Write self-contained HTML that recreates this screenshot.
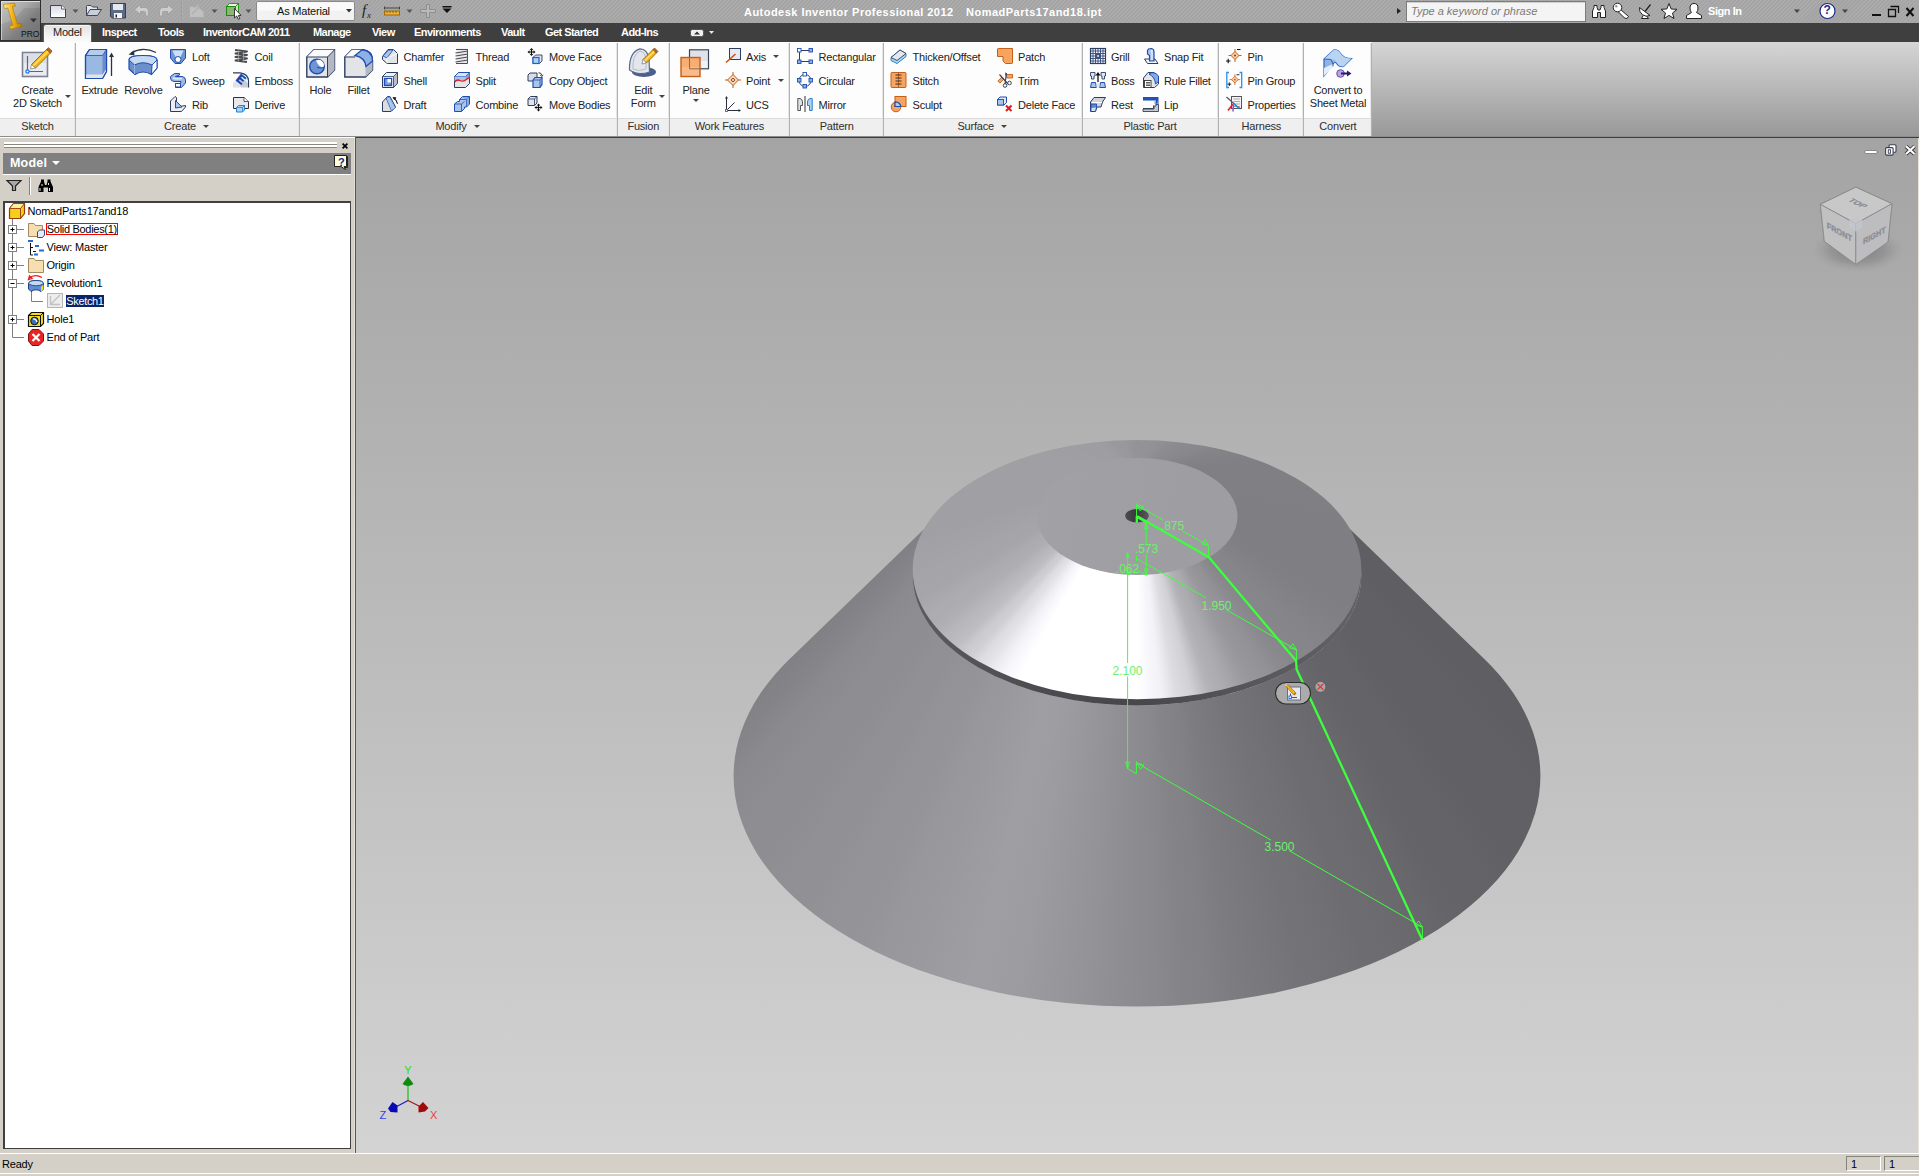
<!DOCTYPE html>
<html lang="en"><head><meta charset="utf-8"><title>Autodesk Inventor Professional 2012 - NomadParts17and18.ipt</title>
<style>
html,body{margin:0;padding:0}
body{width:1919px;height:1176px;position:relative;overflow:hidden;background:#d4d0c8;font-family:"Liberation Sans",sans-serif;font-size:11px;color:#222;line-height:13px}
.a{position:absolute}
.t{position:absolute;white-space:nowrap;line-height:13px;height:13px;letter-spacing:-.2px}
.c{transform:translateX(-50%);text-align:center}
svg{position:absolute;overflow:visible}
#title{left:0;top:0;width:1919px;height:23px;background:repeating-linear-gradient(135deg,#ababab 0,#ababab 1.400px,#a4a4a4 1.400px,#a4a4a4 2.830px)}
#tabs{left:0;top:23px;width:1919px;height:19px;background:#3f3f3f}
#ribbon{left:0;top:42px;width:1919px;height:94px;background:linear-gradient(#d6d6d6 0,#cfcfcf 10px,#b5b5b5 50px,#9a9a9a 92px,#9a9a9a)}
.pn{position:absolute;top:0;height:94px;background:#fcfcfc}
.pn i{position:absolute;left:0;right:0;top:76px;height:18px;background:#efefef;border-top:1px solid #dcdcdc;box-sizing:border-box}
.sep{position:absolute;top:1px;width:1px;height:92px;background:#a8a8a8}
.tab{position:absolute;top:3px;color:#fff;font-weight:bold;letter-spacing:-.55px}
.pt{position:absolute;top:78px;color:#333}
.dn{position:absolute;width:0;height:0;border-left:3px solid transparent;border-right:3px solid transparent;border-top:3.500px solid #444}
</style></head><body>
<div id="title" class="a">
<!-- app button -->
<div class="a" style="left:0;top:0;width:41px;height:41px;background:#2e2e2e;z-index:5"></div>
<div class="a" style="left:1px;top:1px;width:39px;height:39px;z-index:6;background:linear-gradient(135deg,#c9c9c9 0%,#a8a8a8 38%,#8a8a8a 62%,#7a7a7a 100%);box-shadow:inset 1px 1px 0 #dcdcdc"></div>
<svg class="a" style="left:0;top:0;z-index:7" width="41" height="41" viewBox="0 0 41 41">
<defs><linearGradient id="gI" x1="0" y1="0" x2="1" y2="0"><stop offset="0" stop-color="#ffe9a0"/><stop offset=".45" stop-color="#f7b81a"/><stop offset="1" stop-color="#b87a00"/></linearGradient></defs>
<path d="M1 24 Q14 22 24 8 L40 8 L40 40 L1 40Z" fill="#000" opacity=".08"/>
<path d="M3.5 4.5 L14.5 3 L15.5 6 L12.3 6.8 L17.5 24 L21.2 23.3 L22 26.5 L10.5 29.2 L9.5 26 L12.8 25.2 L7.8 8 L4.5 8.6Z" fill="url(#gI)" stroke="#a06c00" stroke-width=".5"/>
<path d="M30 18.5 L37 18.5 L33.5 22.5Z" fill="#2f3540"/>
</svg>
<div class="t" style="left:21px;top:28px;z-index:8;font-size:8.500px;color:#111;letter-spacing:0">PRO</div>
<!-- QAT icons -->
<svg class="a" style="left:0;top:0" width="460" height="23" viewBox="0 0 460 23">
<defs>
<linearGradient id="gP" x1="0" y1="0" x2="0" y2="1"><stop offset="0" stop-color="#d8dbe6"/><stop offset="1" stop-color="#fff"/></linearGradient>
</defs>
<!-- new -->
<path d="M50.5 5.5 H61.5 L65.5 9 V17.5 H50.5Z" fill="url(#gP)" stroke="#3e4656" stroke-width="1"/>
<path d="M61.5 5.5 V9 H65.5" fill="#fff" stroke="#3e4656" stroke-width=".8"/>
<path d="M72.5 9.5 h6 l-3 3.5z" fill="#555"/>
<!-- open -->
<path d="M86.5 15.5 V6.5 Q86.5 5.5 87.5 5.5 H91 L92.5 7 H97.5 V9" fill="#e4e7ee" stroke="#3e4656"/>
<path d="M86.5 15.5 L90 9.5 H101.5 L97.5 15.5Z" fill="#c9cedb" stroke="#3e4656"/>
<!-- save -->
<path d="M110.5 3.5 H125.5 V18 H112.5 L110.5 16.5Z" fill="#5d6a85" stroke="#363e50"/>
<rect x="113" y="4" width="10" height="6" fill="#e6e8ee"/>
<rect x="114" y="13" width="8" height="5" fill="#f4f4f6"/><rect x="115.5" y="14.5" width="1.5" height="3" fill="#222"/>
<!-- undo -->
<path d="M134.5 9.5 L140.5 4.5 V7.5 H145 Q148.5 7.5 148.5 12 V16 H145.5 V12.5 Q145.5 11.5 144.5 11.5 H140.5 V14.5Z" fill="#cdcdcd" stroke="#a2a2a2"/>
<!-- redo -->
<path d="M173.5 9.5 L167.5 4.5 V7.5 H163 Q159.5 7.5 159.5 12 V16 H162.5 V12.5 Q162.5 11.5 163.5 11.5 H167.5 V14.5Z" fill="#cdcdcd" stroke="#a2a2a2"/>
<rect x="181" y="1" width="1" height="20" fill="#9e9e9e"/><rect x="182" y="1" width="1" height="20" fill="#adadad"/>
<!-- greyed icon -->
<path d="M189.5 6.5 H198 L204 12 V17.5 H189.5Z" fill="#c0c0c0" stroke="#aaa"/>
<path d="M192 14 L199 7 M194 8 l4 -3 l1 4" fill="none" stroke="#b0b0b0" stroke-width="1.5"/>
<path d="M211.5 9.5 h6 l-3 3.5z" fill="#555"/>
<!-- green cube -->
<path d="M226.500 6.5 L229.500 3.500 H238.500 V12.500 L235.500 15.500 H226.500Z" fill="#8fbf6a" stroke="#1d8a14"/>
<path d="M229.500 3.500 H238.500 L235.500 6.5 H226.500Z" fill="#e8f5e0" stroke="#1d8a14" stroke-width=".8"/>
<path d="M235.500 6.5 V15.500 L238.500 12.500 V3.500Z" fill="#cfe6c0" stroke="#1d8a14" stroke-width=".8"/>
<rect x="226.500" y="6.500" width="9" height="9" fill="#8eb375" stroke="#1d8a14"/>
<!-- cursor -->
<path d="M234.5 8.5 V18 L236.700 16 L238.300 19.300 L239.800 18.600 L238.300 15.500 L241 15.300Z" fill="#fff" stroke="#111" stroke-width=".8"/>
<path d="M245.500 9.5 h6 l-3 3.5z" fill="#555"/>
<!-- dropdown -->
<rect x="256.500" y="1.500" width="98" height="19" rx="1.500" fill="#f2f2f2" stroke="#8b8b8b"/>
<rect x="257.500" y="2.500" width="96" height="8" fill="#fafafa"/>
<path d="M346 9 h6 l-3 3.5z" fill="#333"/>
<!-- measure icon -->
<g transform="translate(0 2.500)"><rect x="384.500" y="8.500" width="15" height="4" fill="#f0b030" stroke="#9a6a10"/>
<path d="M387 8.500v2M390 8.500v2M393 8.500v2M396 8.500v2" stroke="#7a5408" stroke-width=".8"/>
<path d="M384.500 5.500 H399.500 M384.500 4v3 M399.500 4v3" stroke="#444" stroke-width="1"/>
</g>
<path d="M406.500 9.5 h6 l-3 3.5z" fill="#555"/>
<!-- plus -->
<path d="M426.500 4.500 H429.500 V9.500 H435.500 V12.500 H429.500 V17.500 H426.500 V12.500 H420.500 V9.500 H426.500Z" fill="#b9b9b9" stroke="#8e8e8e"/>
<path d="M442.500 8.500h9l-4.500 4.500z" fill="#111"/><rect x="442.500" y="6" width="9" height="1.500" fill="#111"/>
</svg>
<div class="t" style="left:277px;top:5px;color:#111">As Material</div>
<div class="t" style="left:362px;top:3px;font-family:'Liberation Serif',serif;font-style:italic;font-size:15px;color:#222;line-height:15px">f<span style="font-size:9px;position:relative;top:3px;left:1px">x</span></div>
<!-- title text -->
<div class="t" style="left:744px;top:6px;color:#fff;font-weight:bold;letter-spacing:.47px;font-size:11px">Autodesk Inventor Professional 2012</div>
<div class="t" style="left:966px;top:6px;color:#fff;font-weight:bold;letter-spacing:.5px;font-size:11px">NomadParts17and18.ipt</div>
<!-- search -->
<div class="dn" style="left:1397px;top:8px;border:none;border-top:3.500px solid transparent;border-bottom:3.500px solid transparent;border-left:4px solid #222"></div>
<div class="a" style="left:1406px;top:1px;width:178px;height:19px;background:#f4f4f4;border:1px solid #7d7d7d;box-shadow:inset 0 1px 0 #d0d0d0"></div>
<div class="t" style="left:1411px;top:5px;color:#7a7a7a;font-style:italic;font-size:11px;letter-spacing:0">Type a keyword or phrase</div>
<svg class="a" style="left:1590px;top:0" width="329" height="23" viewBox="1590 0 329 23">
<!-- binoculars -->
<path d="M1592.500 17.500 V11 L1594 7.500 V5.500 H1597 V7.500 L1598 10 H1600 L1601 7.500 V5.500 H1604 V7.500 L1605.500 11 V17.500 H1600.500 V12.500 H1597.500 V17.500Z" fill="#fff" stroke="#222" stroke-width="1"/>
<!-- key -->
<path d="M1620 9L1628.500 16.500L1627 18.500L1624.500 18L1618 11.500" fill="#fff" stroke="#222"/><circle cx="1617.500" cy="7.500" r="4.300" fill="#fff" stroke="#222"/><circle cx="1616.300" cy="6.300" r="1.200" fill="#999"/>
<!-- satellite -->
<path d="M1641.500 18.500L1644.500 13.500L1648.500 18.500Z" fill="#fff" stroke="#222"/><path d="M1639.500 7.500A7.500 7.500 0 0 0 1650 15.500Z" fill="#fff" stroke="#222"/><path d="M1645 11.500L1650.500 4.500" stroke="#222" stroke-width="1.300"/>
<!-- star -->
<path d="M1669 3.500 L1671.200 9 L1677 9.300 L1672.500 13 L1674 18.500 L1669 15.400 L1664 18.500 L1665.500 13 L1661 9.300 L1666.800 9Z" fill="#fff" stroke="#222" stroke-linejoin="round"/>
<!-- person -->
<path d="M1694 3.500 Q1698 3.500 1698 8 Q1698 11 1696.500 12.500 L1701.500 15.500 V18.500 H1686.500 V15.500 L1691.500 12.500 Q1690 11 1690 8 Q1690 3.500 1694 3.500Z" fill="#fff" stroke="#222"/>
<path d="M1794 9.500 h6 l-3 3.500z" fill="#444"/>
<circle cx="1827.500" cy="11" r="7.500" fill="#fff" stroke="#1a2a8a" stroke-width="1.200"/>
<path d="M1842 9.500 h6 l-3 3.500z" fill="#444"/>
<!-- window buttons -->
<rect x="1872" y="14" width="9" height="2" fill="#111"/>
<path d="M1890.500 6.500 H1898.500 V13 M1888.500 9.500 H1895.500 V16.500 H1888.500Z" fill="none" stroke="#111" stroke-width="1.300"/>
<path d="M1906.500 8 L1913.500 16 M1913.500 8 L1906.500 16" stroke="#111" stroke-width="2"/>
</svg>
<div class="t" style="left:1823.500px;top:4px;color:#1a2a8a;font-weight:bold;font-size:12px">?</div>
<div class="t" style="left:1708px;top:5px;color:#fff;font-weight:bold;letter-spacing:-.45px">Sign In</div>
</div>
<div id="tabs" class="a">
<div class="a" style="left:44px;top:2px;width:47px;height:18px;background:linear-gradient(#e2e2e2,#f4f4f4 60%,#fcfcfc);border:1px solid #f8f8f8;border-bottom:none;border-radius:2px 2px 0 0;box-sizing:border-box;box-shadow:0 0 0 1px #5a5a5a"></div>
<div class="tab t" style="left:53px;color:#1c1c1c;font-weight:normal;letter-spacing:-.25px">Model</div>
<div class="tab t" style="left:102px">Inspect</div>
<div class="tab t" style="left:158px">Tools</div>
<div class="tab t" style="left:203px">InventorCAM 2011</div>
<div class="tab t" style="left:313px">Manage</div>
<div class="tab t" style="left:372px">View</div>
<div class="tab t" style="left:414px">Environments</div>
<div class="tab t" style="left:501px">Vault</div>
<div class="tab t" style="left:545px">Get Started</div>
<div class="tab t" style="left:621px">Add-Ins</div>
<svg class="a" style="left:688px;top:4px" width="30" height="12" viewBox="688 27 30 12">
<rect x="690.500" y="29.500" width="13" height="7" rx="2" fill="#f0f0f0" stroke="#555"/>
<path d="M694 34.500 h6 l-3 -3z" fill="#333"/>
<path d="M709 31 h5 l-2.500 3z" fill="#e8e8e8"/>
</svg>
</div>
<div id="ribbon" class="a">
<div class="a" style="left:0;top:0;width:1372px;height:94px;background:#fdfdfd"></div>
<div class="a" style="left:0;top:76px;width:1372px;height:18px;background:#efefef;border-top:1px solid #dadada;box-sizing:border-box"></div>
<div class="a" style="left:74px;top:1px;width:1px;height:93px;background:#e6e6e6"></div><div class="a" style="left:75px;top:1px;width:1px;height:93px;background:#b2b2b2"></div>
<div class="t c" style="left:37.5px;top:78px;color:#2e2e2e">Sketch</div>
<div class="a" style="left:298px;top:1px;width:1px;height:93px;background:#e6e6e6"></div><div class="a" style="left:299px;top:1px;width:1px;height:93px;background:#b2b2b2"></div>
<div class="t c" style="left:180px;top:78px;color:#2e2e2e">Create</div>
<div class="dn" style="left:203px;top:83px"></div>
<div class="a" style="left:616px;top:1px;width:1px;height:93px;background:#e6e6e6"></div><div class="a" style="left:617px;top:1px;width:1px;height:93px;background:#b2b2b2"></div>
<div class="t c" style="left:451px;top:78px;color:#2e2e2e">Modify</div>
<div class="dn" style="left:473.7px;top:83px"></div>
<div class="a" style="left:668px;top:1px;width:1px;height:93px;background:#e6e6e6"></div><div class="a" style="left:669px;top:1px;width:1px;height:93px;background:#b2b2b2"></div>
<div class="t c" style="left:643.3px;top:78px;color:#2e2e2e">Fusion</div>
<div class="a" style="left:788px;top:1px;width:1px;height:93px;background:#e6e6e6"></div><div class="a" style="left:789px;top:1px;width:1px;height:93px;background:#b2b2b2"></div>
<div class="t c" style="left:729.3px;top:78px;color:#2e2e2e">Work Features</div>
<div class="a" style="left:882px;top:1px;width:1px;height:93px;background:#e6e6e6"></div><div class="a" style="left:883px;top:1px;width:1px;height:93px;background:#b2b2b2"></div>
<div class="t c" style="left:836.7px;top:78px;color:#2e2e2e">Pattern</div>
<div class="a" style="left:1081px;top:1px;width:1px;height:93px;background:#e6e6e6"></div><div class="a" style="left:1082px;top:1px;width:1px;height:93px;background:#b2b2b2"></div>
<div class="t c" style="left:975.7px;top:78px;color:#2e2e2e">Surface</div>
<div class="dn" style="left:1000.7px;top:83px"></div>
<div class="a" style="left:1217px;top:1px;width:1px;height:93px;background:#e6e6e6"></div><div class="a" style="left:1218px;top:1px;width:1px;height:93px;background:#b2b2b2"></div>
<div class="t c" style="left:1150px;top:78px;color:#2e2e2e">Plastic Part</div>
<div class="a" style="left:1302px;top:1px;width:1px;height:93px;background:#e6e6e6"></div><div class="a" style="left:1303px;top:1px;width:1px;height:93px;background:#b2b2b2"></div>
<div class="t c" style="left:1261.4px;top:78px;color:#2e2e2e">Harness</div>
<div class="a" style="left:1370px;top:1px;width:1px;height:93px;background:#e6e6e6"></div><div class="a" style="left:1371px;top:1px;width:1px;height:93px;background:#b2b2b2"></div>
<div class="t c" style="left:1337.9px;top:78px;color:#2e2e2e">Convert</div>
<div class="t" style="left:192px;top:9px">Loft</div>
<div class="t" style="left:192px;top:33px">Sweep</div>
<div class="t" style="left:192px;top:57px">Rib</div>
<div class="t" style="left:254.5px;top:9px">Coil</div>
<div class="t" style="left:254.5px;top:33px">Emboss</div>
<div class="t" style="left:254.5px;top:57px">Derive</div>
<div class="t" style="left:403.5px;top:9px">Chamfer</div>
<div class="t" style="left:403.5px;top:33px">Shell</div>
<div class="t" style="left:403.5px;top:57px">Draft</div>
<div class="t" style="left:475.5px;top:9px">Thread</div>
<div class="t" style="left:475.5px;top:33px">Split</div>
<div class="t" style="left:475.5px;top:57px">Combine</div>
<div class="t" style="left:549px;top:9px">Move Face</div>
<div class="t" style="left:549px;top:33px">Copy Object</div>
<div class="t" style="left:549px;top:57px">Move Bodies</div>
<div class="t" style="left:746px;top:9px">Axis</div>
<div class="t" style="left:746px;top:33px">Point</div>
<div class="t" style="left:746px;top:57px">UCS</div>
<div class="t" style="left:818.5px;top:9px">Rectangular</div>
<div class="t" style="left:818.5px;top:33px">Circular</div>
<div class="t" style="left:818.5px;top:57px">Mirror</div>
<div class="t" style="left:912.5px;top:9px">Thicken/Offset</div>
<div class="t" style="left:912.5px;top:33px">Stitch</div>
<div class="t" style="left:912.5px;top:57px">Sculpt</div>
<div class="t" style="left:1018px;top:9px">Patch</div>
<div class="t" style="left:1018px;top:33px">Trim</div>
<div class="t" style="left:1018px;top:57px">Delete Face</div>
<div class="t" style="left:1111px;top:9px">Grill</div>
<div class="t" style="left:1111px;top:33px">Boss</div>
<div class="t" style="left:1111px;top:57px">Rest</div>
<div class="t" style="left:1164px;top:9px">Snap Fit</div>
<div class="t" style="left:1164px;top:33px">Rule Fillet</div>
<div class="t" style="left:1164px;top:57px">Lip</div>
<div class="t" style="left:1247.5px;top:9px">Pin</div>
<div class="t" style="left:1247.5px;top:33px">Pin Group</div>
<div class="t" style="left:1247.5px;top:57px">Properties</div>
<div class="t c" style="left:37.5px;top:42px">Create</div>
<div class="t c" style="left:37.5px;top:55px">2D Sketch</div>
<div class="dn" style="left:64.7px;top:53px"></div>
<div class="t c" style="left:99.7px;top:42px">Extrude</div>
<div class="t c" style="left:143.5px;top:42px">Revolve</div>
<div class="t c" style="left:320.5px;top:42px">Hole</div>
<div class="t c" style="left:358.5px;top:42px">Fillet</div>
<div class="t c" style="left:643.3px;top:42px">Edit</div>
<div class="t c" style="left:643.3px;top:55px">Form</div>
<div class="dn" style="left:658.7px;top:53px"></div>
<div class="t c" style="left:696px;top:42px">Plane</div>
<div class="t c" style="left:1338px;top:42px">Convert to</div>
<div class="t c" style="left:1338px;top:55px">Sheet Metal</div>
<div class="dn" style="left:693px;top:57px"></div>
<div class="dn" style="left:772.500px;top:13px"></div><div class="dn" style="left:777.500px;top:37px"></div>
<svg class="a" style="left:0;top:0" width="1372" height="94" viewBox="0 0 1372 94"><g transform="translate(170 6)"><path d="M.5 1.500H15.500V10L11 15.500H5L.5 10Z" fill="#6f95d2" stroke="#1f4db3"/><path d="M2.500 2.500H13.500L10.500 9H5.500Z" fill="#cfe0f5"/><circle cx="8" cy="11.500" r="3" fill="#fff" stroke="#1f4db3"/></g><g transform="translate(170 30)"><path d="M4.500 1.500H9.500V3L5.500 4.500H12Q15.500 5 15.500 8V11L11.500 15.500H5.500V11.500H10.500L11 9.500H4Q.5 9 .5 6V4.500Z" fill="#9db9e4" stroke="#1f4db3"/><path d="M5.500 11.500H10.500V15H5.500Z" fill="#fff" stroke="#1f4db3"/><path d="M3 6Q6 7.500 12 6.500" fill="none" stroke="#dbe8f8" stroke-width="1.500"/></g><g transform="translate(170 54)"><path d="M.5 5L5 .5L6.500 1.500V11L15.500 9.500V11L11.500 15.500H.5Z" fill="#eceef3" stroke="#2c3e63"/><path d="M5.500 4.500L12 11L5.500 12Z" fill="#a9c5ea" stroke="#1f4db3"/></g><g transform="translate(233 6)"><path d="M2 2L14 3.500L2.500 5.500L14 7L2.500 9L14 10.500L2.500 12.500L14 14" fill="none" stroke="#4a4a4e" stroke-width="1.900" stroke-linejoin="round"/><path d="M5.500 2.500L5.500 13.500M10.500 3.500V13.500" stroke="#c8c8cc" stroke-width="1.200" opacity=".55"/></g><g transform="translate(233 30)"><path d="M0 .8H7Q15.500 2 15.500 9V15.500" fill="none" stroke="#2c3e63" stroke-width="1.200"/><path d="M0 10Q6 10 8 15.500H0Z" fill="#dfe2e8"/><path d="M8 15.500Q7 11 2 9.500L9 3.500L15 9V15.500Z" fill="#c9cdd6"/><path d="M9 3.500L15 8.500V11L9 6.500Z" fill="#fff" opacity=".7"/><text x="3.500" y="11.500" font-family="Liberation Sans,sans-serif" font-weight="bold" font-size="12" fill="#0e44b4" stroke="#0e44b4" stroke-width=".5" transform="rotate(38 8 8)">E</text></g><g transform="translate(233 54)"><path d="M.5 1.500H11L15.500 5.500V12.500H.5Z" fill="#e6e8ee" stroke="#333"/><path d="M11 1.500V5.500H15.500" fill="#fff" stroke="#333" stroke-width=".8"/><path d="M3.500 11.500L5.500 9.500H11.500V14L9.500 16H3.500Z" fill="#a8d6f2" stroke="#2a7fd6"/><path d="M3.500 11.500H9.500V16M9.500 11.500L11.500 9.500" fill="none" stroke="#2a7fd6" stroke-width=".8"/></g><g transform="translate(382 6)"><path d="M.5 8.500L6 1.500H11.500L15.500 5.500V15.500H5L.5 11.500Z" fill="#e3e4e8" stroke="#2c3e63"/><path d="M1 8L6.500 2H11L5 10Z" fill="#a9c5ea" stroke="#1f4db3" stroke-width=".8"/><path d="M5 10V15.500M5 10L15.500 5.500" fill="none" stroke="#fff" stroke-width=".8"/></g><g transform="translate(382 30)"><path d="M.5 4.500L4.500 .5H15.500V11.500L11.500 15.500H.5Z" fill="#f1f2f5" stroke="#2c3e63"/><path d="M11.500 4.500V15.500L15.500 11.500V.5Z" fill="#b9bdc8" stroke="#2c3e63" stroke-width=".8"/><path d="M.5 4.500H11.500" stroke="#2c3e63" stroke-width=".8"/><rect x="2.500" y="6.500" width="7" height="7" fill="#7a9fe0" stroke="#1f4db3" stroke-width="1.300"/><rect x="5.500" y="7" width="3.500" height="3.500" fill="#fff"/></g><g transform="translate(382 54)"><path d="M.5 6L5.500 .5H8L13.500 11L9 15.500H.5Z" fill="#dcdde1" stroke="#2c3e63"/><path d="M4 2L7.500 .5L13.500 11.500L9.500 15Z" fill="#a9c5ea" stroke="#1f4db3" stroke-dasharray="1.500 .7"/><path d="M12 2Q15 4 15.500 8M11 1.500l3 .3l-1.500 2z" fill="#222" stroke="#222" stroke-width=".9" fill-opacity="1"/></g><g transform="translate(454 6)"><path d="M2.500 .5H13.500V15.500H2.500Z" fill="#e9e9ec"/><path d="M2 1.500H13.500M1.500 5L14 3M1.500 8L14 6M1.500 11L14 9M1.500 14L14 12M2 15.500H13.500" stroke="#4a4d55" stroke-width="1.200" fill="none"/><path d="M13.500 1V15.500" stroke="#555" stroke-width="1"/></g><g transform="translate(454 30)"><path d="M.5 4.500L4.500 .5H15.500V11.500L11.500 15.500H.5Z" fill="#e4e5e9" stroke="#2c3e63"/><path d="M.5 4.500L4.500 .5H15.500L11.500 4.500Z" fill="#d4e3f6" stroke="#1f4db3"/><path d="M.5 4.500H11.500V8L.5 9.500Z" fill="#a9c5ea"/><path d="M11.500 4.500L15.500 .5V5.500L11.500 8Z" fill="#7f9fd0"/><path d="M.5 10Q3 7 6 8.500T11.500 8L15.500 5.500" fill="none" stroke="#e8141c" stroke-width="1.300"/></g><g transform="translate(454 54)"><path d="M5.500 3.500L8.500 .5H15.500V8L12.500 11H10.500V12.500L7.500 15.500H.5V8L3.500 5.500H5.500Z" fill="#a9c5ea" stroke="#1f4db3"/><path d="M5.500 3.500H12.500V11M12.500 3.500L15.500 .5M.5 8H7.500V15.500M7.500 8L10.500 5.500" fill="none" stroke="#1f4db3" stroke-width=".8"/><path d="M8 1L12.500 3.500V10.500L15 8V1Z" fill="#7396d2" opacity=".6"/></g><g transform="translate(527.5 6)"><g transform="translate(0 0)"><path d="M4 0L5.800 2H4.600V3.400H6V2.200L8 4L6 5.800V4.600H4.600V6H5.800L4 8L2.200 6H3.400V4.600H2V5.800L0 4L2 2.200V3.400H3.400V2H2.200Z" fill="#111"/></g><path d="M5.500 9.500L8 7H14.500V13L12 15.500H5.500Z" fill="#dfe3ea" stroke="#2c3e63" stroke-width=".9"/><rect x="5.500" y="9.500" width="6" height="6" fill="#a9d3ee" stroke="#1f5fd0" stroke-width="1.200"/></g><g transform="translate(527.5 30)"><path d="M.5 3L2.500 1H9.500V7L7.500 9H.5Z" fill="#d9dce4" stroke="#2c3e63"/><path d="M5.500 8L7.500 5.500H14.500V12.500L12.500 15.500H5.500Z" fill="#a9c5ea" stroke="#1f4db3" stroke-width="1.200"/><path d="M5.500 8H12.500V15.500M12.500 8L14.500 5.500" fill="none" stroke="#1f4db3" stroke-width=".8"/><path d="M11 .8Q14 .5 14.300 3.500M12.800 3l1.500 1.500l1.300-1.700" fill="none" stroke="#222" stroke-width=".9"/></g><g transform="translate(527.5 54)"><path d="M.5 3L3 .5H9.500V7L7 9.500H.5Z" fill="#e2e4ea" stroke="#2c3e63"/><path d="M.5 3H7V9.500M7 3L9.500 .5" fill="none" stroke="#2c3e63" stroke-width=".8"/><g transform="translate(7 7.5)"><path d="M4 0L5.800 2H4.600V3.400H6V2.200L8 4L6 5.800V4.600H4.600V6H5.800L4 8L2.200 6H3.400V4.600H2V5.800L0 4L2 2.200V3.400H3.400V2H2.200Z" fill="#111"/></g></g><g transform="translate(725 6)"><rect x="4.500" y=".5" width="11" height="11" fill="#e8eaef" stroke="#2c3e63"/><path d="M1 14.500L10.500 6" stroke="#c5561a" stroke-width="1.600"/></g><g transform="translate(725 30)"><path d="M8 0V16M0 8H16" stroke="#c55f1a" stroke-width="1"/><path d="M8 2.500L13.500 8L8 13.500L2.500 8Z" fill="#fbd5b5" stroke="#c55f1a"/><circle cx="8" cy="8" r="1.500" fill="#fff" stroke="#6a3410" stroke-width=".9"/></g><g transform="translate(725 54)"><path d="M1.500 14.500V1.500M1.500 14.500H14.500M1.500 14.500L9.500 6.500" stroke="#2a2f3a" stroke-width="1" fill="none"/><path d="M1.500 0L0 2.500H3ZM16 14.500L13.500 13V16Z" fill="#2a2f3a"/><rect x=".5" y="13.500" width="2" height="2" fill="#fff" stroke="#1f6fe0" stroke-width=".9"/></g><g transform="translate(797 6)"><path d="M2.500 2.500H13.500M2.500 13.500H13.500M2.500 2.500V13.500" stroke="#2c3e63" stroke-width="1"/><rect x="0.5" y="0.5" width="3.500" height="3.500" fill="#fff" stroke="#1f4db3" stroke-width=".9"/><rect x="12" y="0.5" width="3.500" height="3.500" fill="#8fb0e6" stroke="#1f4db3" stroke-width=".9"/><rect x="0.5" y="12" width="3.500" height="3.500" fill="#8fb0e6" stroke="#1f4db3" stroke-width=".9"/><rect x="12" y="12" width="3.500" height="3.500" fill="#8fb0e6" stroke="#1f4db3" stroke-width=".9"/></g><g transform="translate(797 30)"><circle cx="8" cy="8.500" r="6" fill="none" stroke="#2c3e63" stroke-width="1"/><rect x="6" y="0.5" width="3.500" height="3.500" fill="#fff" stroke="#1f4db3" stroke-width=".9"/><rect x="0.5" y="6.5" width="3.500" height="3.500" fill="#8fb0e6" stroke="#1f4db3" stroke-width=".9"/><rect x="12" y="6.5" width="3.500" height="3.500" fill="#8fb0e6" stroke="#1f4db3" stroke-width=".9"/><rect x="6" y="12.5" width="3.500" height="3.500" fill="#8fb0e6" stroke="#1f4db3" stroke-width=".9"/></g><g transform="translate(797 54)"><path d="M8 0V16" stroke="#333" stroke-width="1"/><path d="M.8 2.500H3Q5.500 3 5.500 6V9.500H3.500V14.500H.8Z" fill="#dfe1e6" stroke="#555"/><path d="M15.200 2.500H13Q10.500 3 10.500 6V9.500H12.500V14.500H15.200Z" fill="#a8d4f0" stroke="#2a7fd0"/></g><g transform="translate(890.5 6)"><path d="M.5 9.500L9.500 2L15.500 5.500V8.500L6.500 15.500L.5 12.500Z" fill="#a8d8f2" stroke="#2a7fd0"/><path d="M.5 9.500L9.500 2L15.500 5.500L6.500 12.500Z" fill="#e6e7ea" stroke="#2c3e63" stroke-width=".9"/></g><g transform="translate(890.5 30)"><rect x=".5" y=".5" width="15" height="15" rx="1" fill="#f6a560" stroke="#c55f1a"/><path d="M8 .5V15.500" stroke="#c55f1a"/><path d="M5 3H11M5 6H11M5 9H11M5 12H11" stroke="#333" stroke-width="1"/></g><g transform="translate(890.5 54)"><circle cx="5.500" cy="11" r="4.800" fill="#f6a560" stroke="#c55f1a"/><rect x="4.500" y=".5" width="11" height="10" fill="#f6a560" stroke="#c55f1a"/><path d="M4.500 5.800Q9.800 6 10.300 10.500H4.500Z" fill="#b5cbea" stroke="#1f4db3" stroke-width="1.200"/></g><g transform="translate(997 6)"><path d="M.5 1Q.5 .5 1.500 .5H15.500V15Q15.500 15.500 14.500 15.500H8.500L6 13V8.500H.5Z" fill="#f6a560" stroke="#c55f1a"/></g><g transform="translate(997 30)"><path d="M8.500 .5V3M8.500 2.500H15.500V6H10Z" fill="#f6a560" stroke="#c55f1a" stroke-width=".9"/><path d="M.8 9L5 5L7 7L3 11Z" fill="#f6a560" stroke="#c55f1a" stroke-width=".9"/><path d="M2.500 2.500L11 12M9.500 1L8 12" stroke="#3a4458" stroke-width="1.200"/><circle cx="8" cy="13.500" r="1.800" fill="#fff" stroke="#3a4458"/><circle cx="12.500" cy="11" r="1.800" fill="#fff" stroke="#3a4458"/></g><g transform="translate(997 54)"><path d="M.5 3.500L3 1H9.500V6.500L7 9H.5Z" fill="#e6e8ee" stroke="#1f4db3"/><rect x=".5" y="3.500" width="6" height="5.500" fill="#a9c5ea" stroke="#1f4db3" stroke-width=".9"/><path d="M9 9.500L14.500 15M14.500 9.500L9 15" stroke="#dc1a1a" stroke-width="2"/></g><g transform="translate(1090 6)"><rect x=".5" y=".5" width="15" height="15" fill="#fbfcfe" stroke="#2c3e63" stroke-width="1.200"/><path d="M3 1V15M5.500 1V15M8 1V15M10.500 1V15M13 1V15M1 3H15M1 5.500H15M1 8H15M1 10.500H15M1 13H15" stroke="#34497a" stroke-width=".9"/><circle cx="8" cy="8" r="2.700" fill="#3c5080"/><circle cx="8" cy="8" r="1.100" fill="#d8deea"/></g><g transform="translate(1090 30)"><path d="M.5 .5H5V4H4V7H1.500V4H.5ZM15.500 .5H11V4H12V7H14.500V4H15.500Z" fill="#dfe6f3" stroke="#2c3e63" stroke-width=".9"/><path d="M8 10V2" stroke="#111" stroke-width="1.300"/><path d="M8 0L5.500 3.500H10.500Z" fill="#111"/><path d="M1.500 10.500H5.500L6.500 15.500H.5ZM10.500 10.500H14.500L15.500 15.500H9.500Z" fill="#a9c5ea" stroke="#1f4db3"/><rect x="6.500" y="11" width="3" height="4.500" fill="#e8e8ec"/></g><g transform="translate(1090 54)"><path d="M.5 6L4 1.500H15.500L12.500 6L11 11H7L5.500 15.500H.5Z" fill="#d0d4dc" stroke="#2c3e63"/><path d="M2 6.500H12" stroke="#fff"/><path d="M1 8H6.500V11L5 15H1Z" fill="#5d86d0" stroke="#1f4db3" stroke-width=".9"/><path d="M1.500 12L6 11.500L5 15H1.500Z" fill="#cfe0f6"/></g><g transform="translate(1143 6)"><path d="M1.500 11H12L15 15.500H4.500Z" fill="#f4f6fa" stroke="#2c3e63"/><path d="M5.500 1L8.500 .5Q11 1 11 4V13H6.500V7.500L4.500 6V2.500Z" fill="#a9c5ee" stroke="#1f4db3" stroke-width="1.200"/><path d="M7.500 3L9 2.500V12" stroke="#e8f0fc" stroke-width="1.300" fill="none"/></g><g transform="translate(1143 30)"><path d="M.5 6L5 .5H11L15.500 5V12L11.500 15.500H.5Z" fill="#e3e5ea" stroke="#2c3e63"/><path d="M6 2Q11 -1.500 15.500 4V9.500L12.500 12Q12 5 6 2Z" fill="#86a9de" stroke="#1f4db3"/><rect x="1.500" y="8.500" width="6.500" height="7" fill="#fff" stroke="#333" stroke-width=".9"/><path d="M3 10.500H7M3 12H7M3 13.500H7" stroke="#333" stroke-width=".8"/></g><g transform="translate(1143 54)"><path d="M0 1H15.500V8.500H12.500V4H0Z" fill="#2050b8"/><path d="M0 4.500H12V8H15V5" fill="none" stroke="#8aa4d8" stroke-width="1"/><path d="M15.500 8.500V15.500H0V13H11V10H13V8.500Z" fill="#c4c8d2" stroke="#3a4258" stroke-width=".9"/><path d="M0 12.500H10.500V9.500" fill="none" stroke="#3a4258" stroke-width="1"/></g><g transform="translate(1226 6)"><path d="M9 1V14M2.500 7.500H15.500" stroke="#c55f1a" stroke-width="1"/><path d="M9 3.500L13 7.500L9 11.500L5 7.500Z" fill="#fbd0aa" stroke="#c55f1a"/><circle cx="9" cy="7.500" r=".9" fill="#6a3410"/><path d="M11 1.500H14.500M0 13H4.500M2.200 10.800V15.200" stroke="#111" stroke-width="1.100"/></g><g transform="translate(1226 30)"><path d="M3 .5H.8V15.500H3M13.500 .5H15.700V15.500H13.500" fill="none" stroke="#2f8fe8" stroke-width="1.300"/><g transform="translate(1.500 1.500) scale(.82)"><path d="M9 1V14M2.500 7.500H15.500" stroke="#c55f1a" stroke-width="1"/><path d="M9 3.500L13 7.500L9 11.500L5 7.500Z" fill="#fbd0aa" stroke="#c55f1a"/><circle cx="9" cy="7.500" r=".9" fill="#6a3410"/><path d="M11 1.500H14.500M0 13H4.500M2.200 10.800V15.200" stroke="#111" stroke-width="1.100"/></g></g><g transform="translate(1226 54)"><rect x="5.500" y=".5" width="10" height="12" fill="#f4f4f6" stroke="#555"/><path d="M7.500 3H14M7.500 5.500H14M7.500 8H14M7.500 10.500H14" stroke="#8a8a8a" stroke-width=".7"/><path d="M.5 1L10 9.500L14.500 13" stroke="#556" stroke-width="1.200" fill="none"/><path d="M7 8L2 14.500" stroke="#e02020" stroke-width="1.600"/><path d="M7.500 8.500L7 15.500" stroke="#8a5fd0" stroke-width="1.600"/><path d="M8 8L13 12.500" stroke="#2f8fe8" stroke-width="1.300"/></g><g transform="translate(21 6)"><rect x="1.500" y="4.500" width="25" height="24" fill="#e9ebf0" stroke="#7b8294" stroke-width="1.600"/><rect x="3" y="6" width="22" height="9" fill="#d7dae3" opacity=".7"/><path d="M6.500 8V23.500H22" fill="none" stroke="#5f6678" stroke-width="1.200"/><circle cx="6.500" cy="23.500" r="1.600" fill="#fff" stroke="#1f6fe0" stroke-width="1.200"/><path d="M10.500 16.500L25.500 1.500L29.500 5L14.500 20Z" fill="#f5b516" stroke="#8a5a00" stroke-width=".8"/><path d="M12 18L27.500 3" stroke="#ffe27a" stroke-width="1.300"/><path d="M25.500 1.500L27.500 -.3L31 3L29.500 5Z" fill="#b86a2a" stroke="#7a4210" stroke-width=".7"/><path d="M10.500 16.500L9.500 21L14.500 20Z" fill="#fff" stroke="#777" stroke-width=".7"/></g><g transform="translate(84 7)"><path d="M1.500 6.500L5.500 .5H22.500V22.500L18.500 29.500H1.500Z" fill="#9ab9e2" stroke="#1f4db3" stroke-width="1.200"/><path d="M18.500 6.500L22.500 .5V22.500L18.500 29.500Z" fill="#6a8cc8"/><path d="M1.500 6.500L5.500 .5H22.500L18.500 6.500Z" fill="#b5cdec" stroke="#1f4db3" stroke-width=".8"/><path d="M1.500 25.500H18.500L22.500 19.500V22.500L18.500 29.500H1.500Z" fill="#e4e4e6"/><path d="M1.500 6.500L5.500 .5H22.500V22.500L18.500 29.500H1.500Z" fill="none" stroke="#1f4db3" stroke-width="1.200"/><path d="M27.500 27V6" stroke="#2c3444" stroke-width="1.300"/><path d="M27.500 3.500L25 8H30Z" fill="#2c3444"/></g><g transform="translate(127 6)"><path d="M2 12Q2 7.500 16 7.500T30 12V20L24.500 26.500Q16 21.500 8 26.500L2 21Z" fill="#6d8fca" stroke="#1f4db3" stroke-width="1.200"/><path d="M2 12Q2 7.500 16 7.500T30 12L25 17Q16 12.500 7.500 17Z" fill="#c5d9f0" stroke="#1f4db3" stroke-width="1"/><path d="M25 17L30 12V20L24.500 26.500Z" fill="#fff" stroke="#1f4db3" stroke-width="1"/><path d="M7.500 17V26" stroke="#9db6e0" stroke-width="1"/><path d="M4 5Q16 -2 29 4.500" fill="none" stroke="#2c3444" stroke-width="1.300"/><path d="M1.500 6.500L7 2.500L7.500 7.500Z" fill="#2c3444"/></g><g transform="translate(306 7)"><path d="M.8 8L8 .8H28.500V21L21.500 28H.8Z" fill="#e4e5e8" stroke="#2c3e63" stroke-width="1.400"/><path d="M21.500 8L28.500 .8V21L21.500 28Z" fill="#b4b8c2"/><path d="M.8 8L8 .8H28.500L21.500 8Z" fill="#fafafb"/><path d="M.8 8H21.500V28M21.500 8L28.500 .8" fill="none" stroke="#2c3e63" stroke-width="1"/><circle cx="11" cy="17.500" r="7.300" fill="#6f94d4" stroke="#1f4db3" stroke-width="1.400"/><path d="M10 11.500Q15 9 18 15L17.500 18.500Q13 18.500 10 11.500Z" fill="#fff"/><path d="M11 18.500Q15 19.500 18.300 18.500" fill="none" stroke="#1f4db3" stroke-width="1"/></g><g transform="translate(344 7)"><path d="M.8 8L8 .8H19Q28.500 2 28.500 12V21L21.500 28H.8Z" fill="#e3e4e7" stroke="#2c3e63" stroke-width="1.400"/><path d="M21.500 17L28.500 12V21L21.500 28Z" fill="#b4b8c2"/><path d="M.8 8L8 .8H18L11 6.500Z" fill="#fafafb"/><path d="M11 6.500L18 .8Q28.500 1.500 28.500 12L22 17.500Q21 8.500 11 6.500Z" fill="#8fb0e2" stroke="#1f4db3" stroke-width="1.300"/><path d="M.8 8H11" stroke="#2c3e63" stroke-width="1"/></g><g transform="translate(628 6)"><ellipse cx="16" cy="24" rx="12" ry="5" fill="#4a5f8a"/><path d="M1.500 22Q1 4 12 .8Q19 1 21 10L21.500 24Q10 28 1.500 22Z" fill="#e3e6ec" stroke="#5a6a8c" stroke-width="1.200"/><path d="M5 21Q4 7 12 3Q17 4 18 11V21Q11 24 5 21Z" fill="none" stroke="#b4bccc" stroke-width="1"/><path d="M15 11.500L25 1.500L28.500 5L18.500 15Z" fill="#f5b516" stroke="#8a5a00" stroke-width=".8"/><path d="M16.500 13L26.500 3" stroke="#ffe27a" stroke-width="1.200"/><path d="M25 1.500L26.500 0L30 3.500L28.500 5Z" fill="#b86a2a" stroke="#7a4210" stroke-width=".7"/><path d="M15 11.500L14 16L18.500 15Z" fill="#fff" stroke="#777" stroke-width=".7"/></g><g transform="translate(680 7)"><rect x="9.500" y=".8" width="19" height="19" fill="#dfe2ea" stroke="#3c465a" stroke-width="1.200"/><rect x="10.500" y="12" width="17" height="7" fill="#f4f5f8" opacity=".8"/><rect x="1" y="8.500" width="19" height="19" fill="#f9a868" stroke="#c55f1a" stroke-width="1.400" fill-opacity=".93"/><rect x="2" y="18" width="17" height="8.500" fill="#fcc193" opacity=".7"/><path d="M9.500 8.500V19.800H20" fill="none" stroke="#8c6a58" stroke-width="1"/></g><g transform="translate(1322 7)"><path d="M2 27V10L12 .8Q16 .5 19 5T29.500 9.500L21.500 17.500Q17 18 15 15T11 15Z" fill="#8fb4e4" stroke="#2a62c0" stroke-width="1.200"/><path d="M2 10L12 .8Q16 .5 19 5T29.500 9.500L21.500 17.500Q17 18 15 14T9 10.500Z" fill="#b9d3f2"/><path d="M2 27L11 17.500V15L2 19Z" fill="#e4eefb"/><path d="M2 10L9 10.500L11 15V17.500" fill="none" stroke="#2a62c0" stroke-width="1"/><circle cx="18.500" cy="24.500" r="3.800" fill="#b8a4e0" stroke="#6a4cb0"/><path d="M19 23.500H25V21.500L29.500 24.500L25 27.500V25.500H19Z" fill="#2c1a6a"/></g></svg>
</div>
<div class="a" style="left:0;top:136px;width:1919px;height:1px;background:#8c8c8c"></div><div class="a" style="left:355px;top:137px;width:1564px;height:1px;background:#3e3e3e"></div>
<div class="a" style="left:0;top:137px;width:355px;height:1px;background:#fff"></div>
<div id="browser" class="a" style="left:0;top:139px;width:355px;height:1014px;background:#d4d0c8">
<div class="a" style="left:4px;top:3px;width:333px;height:2px;background:#fff;border-bottom:1px solid #8a8780"></div>
<div class="a" style="left:4px;top:6px;width:333px;height:2px;background:#fff;border-bottom:1px solid #8a8780"></div>
<svg class="a" style="left:342px;top:4px" width="6" height="6" viewBox="0 0 6 6"><path d="M.6 .6L5.400 5.400M5.400 .6L.6 5.400" stroke="#000" stroke-width="1.700"/></svg>
<div class="a" style="left:3px;top:14px;width:348px;height:21px;background:#808080;border-bottom:1px solid #fff"></div>
<div class="t" style="left:10px;top:17px;font-size:12.500px;font-weight:bold;color:#fff;line-height:15px;height:15px;letter-spacing:.2px">Model</div>
<div class="dn" style="left:52px;top:22px;border-left-width:4px;border-right-width:4px;border-top:4px solid #fff"></div>
<svg class="a" style="left:334px;top:16px" width="14" height="16" viewBox="0 0 14 16"><path d="M.5 .5H12.500V11.500H10L11.500 14.500L7 11.500H.5Z" fill="#ffffd8" stroke="#222"/><path d="M12.500 1.500H13.500V12.500H11" fill="none" stroke="#222"/></svg>
<div class="t" style="left:338px;top:17px;font-weight:bold;font-size:11px;color:#1a1aa0">?</div>
<svg class="a" style="left:0;top:38px" width="60" height="20" viewBox="0 177 60 20">
<path d="M7 180.500H21L15.500 186V190.500H12.500V186Z" fill="#a8a8a8" stroke="#222" stroke-width="1.200"/>
<rect x="29" y="177" width="1" height="18" fill="#868379"/><rect x="30" y="177" width="1" height="18" fill="#fff"/>
<path d="M38.500 192V187L41 181.500V179.500H44V181.500L45 185H46.500L47.500 181.500V179.500H50.500V181.500L53 187V192H48V187.500H43.500V192Z" fill="#000"/>
<path d="M40 188v3M42 184v2M49.500 188v3M48.500 183v2" stroke="#fff" stroke-width=".9"/>
</svg>
<!-- tree box -->
<div class="a" style="left:3px;top:62px;width:348px;height:948px;background:#fff;border:1px solid #404040;border-top:2px solid #404040;border-left:2px solid #404040;box-sizing:border-box"></div>
<svg class="a" style="left:0;top:62px" width="354" height="160" viewBox="0 201 354 160">
<g fill="none" stroke="#808080" stroke-width="1">
<path d="M12.500 219V337.500H24"/><path d="M17 229.500H24M17 247.500H24M17 265.500H24M17 283.500H24M17 319.500H24"/>
<path d="M31.500 291V301.500H43"/>
</g>
<g fill="#fff" stroke="#808080">
<rect x="8.500" y="225.500" width="8" height="8"/><rect x="8.500" y="243.500" width="8" height="8"/><rect x="8.500" y="261.500" width="8" height="8"/><rect x="8.500" y="279.500" width="8" height="8"/><rect x="8.500" y="315.500" width="8" height="8"/>
</g>
<path d="M10.500 229.500h4M12.500 227.500v4M10.500 247.500h4M12.500 245.500v4M10.500 265.500h4M12.500 263.500v4M10.500 283.500h4M10.500 319.500h4M12.500 317.500v4" stroke="#000"/>
<!-- root cube -->
<path d="M9.500 208.500L13.500 203.500H24.500V213.500L20.500 218.500H9.500Z" fill="#f6cf18" stroke="#9a3a12" stroke-width="1.200"/>
<path d="M9.500 208.500L13.500 203.500H24.500L20.500 208.500Z" fill="#fdf0a0" stroke="#9a3a12" stroke-width=".9"/><path d="M20.500 208.500V218.500" stroke="#9a3a12" stroke-width=".9"/>
<!-- solid bodies folder -->
<path d="M28.500 223.500H34L35.500 225.500H42.500V236.500H28.500Z" fill="#f5deb0" stroke="#a08a60"/>
<path d="M37.500 232L39.500 230H44.500V235L42.500 237.500H37.500Z" fill="#e8ecf6" stroke="#3a4a78"/>
<!-- view -->
<path d="M30.500 243V255H33M30.500 247.500H33M33 251.500h3" fill="none" stroke="#111"/>
<rect x="28" y="240" width="5" height="2" fill="#2a6ad0"/><rect x="35" y="245" width="4" height="2" fill="#2a6ad0"/><rect x="39" y="249.500" width="5" height="2" fill="#2a6ad0"/><rect x="34" y="253.500" width="4" height="2" fill="#2a6ad0"/>
<!-- origin folder -->
<path d="M28.500 258.500H34L35.500 260.500H43.500V272.500H28.500Z" fill="#f5deb0" stroke="#a08a60"/>
<!-- revolution -->
<path d="M28.500 284Q28.500 280.500 36 280.500T43.500 284V289L41 291.500Q36 288 31 291.500L28.500 289Z" fill="#5f8fd0" stroke="#1c3c80"/>
<path d="M28.500 284Q28.500 280.500 36 280.500T43.500 284Q36 287.500 28.500 284Z" fill="#c4daf2" stroke="#1c3c80" stroke-width=".8"/><path d="M41 287L43.500 284.500V289L41 291.500Z" fill="#f2d820"/>
<path d="M29 278Q35 273.500 42 277.500M28.500 279.500l1-3.500l2.500 2.500z" fill="none" stroke="#e81818" stroke-width="1.300"/>
<!-- sketch icon -->
<rect x="47.500" y="293.500" width="15" height="14" fill="#ededed" stroke="#b4b4b4"/><path d="M50.500 296V304.500H60M51 304L60 295" fill="none" stroke="#c2c2c2" stroke-width="1.300"/>
<!-- hole -->
<path d="M28.500 315.500L31.500 312.500H43.500V323.500L40.500 326.500H28.500Z" fill="#f2e020" stroke="#111" stroke-width="1.200"/><path d="M28.500 315.500H40.500V326.500M40.500 315.500L43.500 312.500" fill="none" stroke="#111"/>
<circle cx="34.500" cy="321" r="3.800" fill="#3f6fb8" stroke="#111"/><path d="M33 319Q36 318.500 37 322" fill="none" stroke="#fff" stroke-width="1.200"/>
<!-- end of part -->
<path d="M32 329.500H39L43.500 334V341L39 345.500H32L28.500 341V334Z" fill="#e62626" stroke="#8a1010"/>
<path d="M32.500 334L39.500 341M39.500 334L32.500 341" stroke="#fff" stroke-width="2.200"/>
</svg>
<div class="a" style="left:45.500px;top:83.500px;width:72px;height:12px;border:1px solid #f00;box-sizing:border-box"></div>
<div class="a" style="left:65.500px;top:155.500px;width:38.500px;height:12.500px;background:#0a246a"></div>
<div class="t" style="left:27.500px;top:65.500px;color:#000">NomadParts17and18</div>
<div class="t" style="left:46.800px;top:83.500px;color:#000;letter-spacing:-.3px">Solid Bodies(1)</div>
<div class="t" style="left:46.500px;top:101.500px;color:#000">View: Master</div>
<div class="t" style="left:46.500px;top:119.500px;color:#000">Origin</div>
<div class="t" style="left:46.500px;top:137.500px;color:#000">Revolution1</div>
<div class="t" style="left:66.300px;top:155.500px;color:#fff;letter-spacing:-.35px">Sketch1</div>
<div class="t" style="left:46.500px;top:173.500px;color:#000">Hole1</div>
<div class="t" style="left:46.500px;top:191.500px;color:#000">End of Part</div>
</div>
<div class="a" style="left:354px;top:138px;width:1px;height:1015px;background:#e2dfd8"></div><div class="a" style="left:355px;top:137px;width:1px;height:1016px;background:#555"></div><div class="a" style="left:1918px;top:138px;width:1px;height:1015px;background:#e8e4d8"></div>
<div id="view" class="a" style="left:356px;top:138px;width:1562px;height:1015px;overflow:hidden;background:linear-gradient(#a4a4a4,#d3d3d3)">
<div class="a" style="left:0;top:0;width:1562px;height:1015px;background:conic-gradient(from 0deg at 781.0px 192.0px,rgb(94,94,98) 128.0deg,rgb(94,94,98) 130.0deg,rgb(95,95,99) 132.0deg,rgb(95,95,99) 134.0deg,rgb(95,95,99) 136.0deg,rgb(96,96,100) 138.0deg,rgb(97,97,101) 140.0deg,rgb(97,97,101) 142.0deg,rgb(97,97,101) 144.0deg,rgb(98,98,102) 146.0deg,rgb(100,100,104) 148.0deg,rgb(100,100,104) 150.0deg,rgb(101,101,105) 152.0deg,rgb(104,104,108) 154.0deg,rgb(106,106,110) 156.0deg,rgb(108,108,112) 158.0deg,rgb(109,109,113) 160.0deg,rgb(112,112,116) 162.0deg,rgb(114,114,118) 164.0deg,rgb(116,116,120) 166.0deg,rgb(119,119,123) 168.0deg,rgb(122,122,126) 170.0deg,rgb(125,125,129) 172.0deg,rgb(130,130,134) 174.0deg,rgb(132,132,136) 176.0deg,rgb(137,137,141) 178.0deg,rgb(140,140,144) 180.0deg,rgb(143,143,147) 182.0deg,rgb(147,147,151) 184.0deg,rgb(150,150,154) 186.0deg,rgb(153,153,157) 188.0deg,rgb(156,156,160) 190.0deg,rgb(158,158,162) 192.0deg,rgb(159,159,163) 194.0deg,rgb(157,157,161) 196.0deg,rgb(155,155,159) 198.0deg,rgb(153,153,157) 200.0deg,rgb(152,152,156) 202.0deg,rgb(149,149,153) 204.0deg,rgb(148,148,152) 206.0deg,rgb(147,147,151) 208.0deg,rgb(145,145,149) 210.0deg,rgb(145,145,149) 212.0deg,rgb(143,143,147) 214.0deg,rgb(142,142,146) 216.0deg,rgb(142,142,146) 218.0deg,rgb(140,140,144) 220.0deg,rgb(138,138,142) 222.0deg,rgb(133,133,137) 224.0deg,rgb(130,130,134) 226.0deg,rgb(127,127,131) 228.0deg,rgb(126,126,130) 230.0deg,rgb(125,125,129) 232.0deg,rgb(125,125,129) 234.0deg);clip-path:path('M590.4 369.5L435.7 518.9A403.4 230.5 0 1 0 1126.3 518.9L971.6 369.5A224.3 129.6 0 1 1 590.4 369.5Z')"></div>
<div class="a" style="left:0;top:0;width:1562px;height:1015px;background:linear-gradient(90deg,#5c5c60 556.0px,#4c4c50 684.0px,#47474b 780.0px,#55555a 884.0px,#626268 1005.0px);clip-path:path('M556.7 437.8A224.3 129.6 0 1 0 1005.3 437.8A224.3 129.6 0 1 0 556.7 437.8Z')"></div>
<div class="a" style="left:0;top:0;width:1562px;height:1015px;background:conic-gradient(from 0deg at 781.0px 335.0px,rgb(148,148,152) 0.0deg,rgb(148,148,152) 5.0deg,rgb(147,147,151) 10.0deg,rgb(147,147,151) 15.0deg,rgb(147,147,151) 20.0deg,rgb(146,146,150) 25.0deg,rgb(146,146,150) 30.0deg,rgb(145,145,149) 35.0deg,rgb(144,144,148) 40.0deg,rgb(142,142,146) 45.0deg,rgb(140,140,144) 50.0deg,rgb(139,139,143) 55.0deg,rgb(138,138,142) 60.0deg,rgb(137,137,141) 65.0deg,rgb(135,135,139) 70.0deg,rgb(132,132,136) 75.0deg,rgb(130,130,134) 80.0deg,rgb(128,128,132) 85.0deg,rgb(128,128,132) 90.0deg,rgb(128,128,132) 95.0deg,rgb(128,128,132) 100.0deg,rgb(127,127,131) 105.0deg,rgb(127,127,131) 110.0deg,rgb(127,127,131) 115.0deg,rgb(127,127,131) 120.0deg,rgb(128,128,132) 125.0deg,rgb(131,131,135) 130.0deg,rgb(134,134,138) 135.0deg,rgb(135,135,139) 140.0deg,rgb(137,137,141) 142.0deg,rgb(140,140,144) 144.0deg,rgb(145,145,149) 146.0deg,rgb(148,148,152) 148.0deg,rgb(150,150,154) 150.0deg,rgb(153,153,157) 152.0deg,rgb(159,159,163) 154.0deg,rgb(166,166,170) 156.0deg,rgb(172,172,176) 158.0deg,rgb(175,175,179) 160.0deg,rgb(181,181,185) 162.0deg,rgb(195,195,199) 164.0deg,rgb(209,209,213) 166.0deg,rgb(215,215,219) 168.0deg,rgb(221,221,225) 170.0deg,rgb(233,233,237) 172.0deg,rgb(243,243,247) 174.0deg,rgb(246,246,250) 176.0deg,rgb(251,251,255) 178.0deg,rgb(255,255,255) 180.0deg,rgb(255,255,255) 182.0deg,rgb(255,255,255) 184.0deg,rgb(255,255,255) 186.0deg,rgb(255,255,255) 188.0deg,rgb(255,255,255) 190.0deg,rgb(255,255,255) 192.0deg,rgb(255,255,255) 194.0deg,rgb(255,255,255) 196.0deg,rgb(255,255,255) 198.0deg,rgb(255,255,255) 200.0deg,rgb(255,255,255) 202.0deg,rgb(255,255,255) 204.0deg,rgb(255,255,255) 206.0deg,rgb(255,255,255) 208.0deg,rgb(255,255,255) 210.0deg,rgb(250,250,254) 212.0deg,rgb(245,245,249) 214.0deg,rgb(237,237,241) 216.0deg,rgb(227,227,231) 218.0deg,rgb(221,221,225) 220.0deg,rgb(208,208,212) 222.0deg,rgb(203,203,207) 224.0deg,rgb(191,191,195) 226.0deg,rgb(186,186,190) 228.0deg,rgb(182,182,186) 230.0deg,rgb(176,176,180) 232.0deg,rgb(173,173,177) 234.0deg,rgb(172,172,176) 236.0deg,rgb(169,169,173) 238.0deg,rgb(166,166,170) 240.0deg,rgb(165,165,169) 242.0deg,rgb(165,165,169) 244.0deg,rgb(164,164,168) 246.0deg,rgb(163,163,167) 248.0deg,rgb(162,162,166) 250.0deg,rgb(160,160,164) 255.0deg,rgb(160,160,164) 260.0deg,rgb(160,160,164) 265.0deg,rgb(160,160,164) 270.0deg,rgb(160,160,164) 275.0deg,rgb(160,160,164) 280.0deg,rgb(159,159,163) 285.0deg,rgb(159,159,163) 290.0deg,rgb(158,158,162) 295.0deg,rgb(158,158,162) 300.0deg,rgb(158,158,162) 305.0deg,rgb(157,157,161) 310.0deg,rgb(156,156,160) 315.0deg,rgb(154,154,158) 320.0deg,rgb(153,153,157) 325.0deg,rgb(153,153,157) 330.0deg,rgb(153,153,157) 335.0deg,rgb(152,152,156) 340.0deg,rgb(150,150,154) 345.0deg,rgb(149,149,153) 350.0deg,rgb(148,148,152) 355.0deg,rgb(148,148,152) 360.0deg);clip-path:path('M556.7 431.6A224.3 129.6 0 1 0 1005.3 431.6A224.3 129.6 0 1 0 556.7 431.6Z')"></div>
<div class="a" style="left:0;top:0;width:1562px;height:1015px;background:linear-gradient(100deg,#a3a3a7 681.0px,#9e9ea2 881.0px);clip-path:path('M681.1 378.5A100.2 58.5 0 1 0 881.5 378.5A100.2 58.5 0 1 0 681.1 378.5Z')"></div>
<svg class="a" style="left:0;top:0" width="1562" height="1015" viewBox="356 138 1562 1015"><defs><linearGradient id="gh" x1="0" y1="0" x2="1" y2="0"><stop offset="0" stop-color="#4c4c50"/><stop offset=".45" stop-color="#3a3a3e"/><stop offset="1" stop-color="#5a5a5e"/></linearGradient><radialGradient id="gsh" cx=".5" cy=".5" r=".5"><stop offset="0" stop-color="#555" stop-opacity=".55"/><stop offset=".6" stop-color="#666" stop-opacity=".3"/><stop offset="1" stop-color="#888" stop-opacity="0"/></radialGradient></defs><ellipse cx="1137" cy="515.700" rx="11.800" ry="6.800" fill="url(#gh)"/><path d="M1136.600 503.200V516M1136.600 504.900L1163.400 520.200M1182.500 531L1208.400 545.700M1208.400 545.300V557.200M1146.200 522.700V543.500M1146.200 554V575M1127.600 552.500V663M1127.600 676.500V768.100M1136.600 558.500L1146.400 564.200M1136.600 556V561M1136.600 569.500L1146.400 575.200M1127.600 575L1136.600 569.500M1146.400 564L1206 597.800M1226 609.600L1296.400 649.800M1296.400 648.900V660.800M1126.900 768.100L1136.300 773.700M1136.400 761.200V773.700M1136.900 763.100L1271 840.200M1289.500 850.800L1422.200 927M1422.400 926.300V939.500" fill="none" stroke="#3dff3d" stroke-width="1"/><path d="M1136.600 504.900l7 2l-3.500 4zM1208.400 545.700l-7-2l3.500-4zM1146.200 522.700l-2 6h4zM1146.200 575l-2-6h4zM1127.600 575l-2-6h4zM1127.600 768.100l-2-6h4zM1296.400 649.800l-7-2l3.500-4zM1136.900 763.100l7 2l-3.500 4zM1422.200 927l-7-2l3.500-4zM1127.600 552.500l-1.500 5h3z" fill="none" stroke="#3dff3d" stroke-width=".9"/><path d="M1136.800 516V522.700M1137.200 516.300L1208.900 557.200L1296.100 660.800L1296.600 669.300L1422.200 939.500" fill="none" stroke="#3dff3d" stroke-width="2.300" stroke-linejoin="round"/><path d="M1137 522.500V517.500L1146 522.500" fill="none" stroke="#3dff3d" stroke-width="1.300"/><text x="1172.5" y="530.3" font-family="Liberation Sans,sans-serif" font-size="12" fill="#6cf06c" text-anchor="middle">.875</text><text x="1146.5" y="553.3" font-family="Liberation Sans,sans-serif" font-size="12" fill="#6cf06c" text-anchor="middle">.573</text><text x="1127.5" y="573" font-family="Liberation Sans,sans-serif" font-size="12" fill="#6cf06c" text-anchor="middle">.062</text><text x="1216.5" y="610.3" font-family="Liberation Sans,sans-serif" font-size="12" fill="#6cf06c" text-anchor="middle">1.950</text><text x="1127.5" y="674.7" font-family="Liberation Sans,sans-serif" font-size="12" fill="#6cf06c" text-anchor="middle">2.100</text><text x="1279.5" y="851.2" font-family="Liberation Sans,sans-serif" font-size="12" fill="#6cf06c" text-anchor="middle">3.500</text><rect x="1275.500" y="682.500" width="35" height="21.500" rx="10.700" fill="#ababab" stroke="#2e2e2e" stroke-width="1.100"/><g transform="translate(1285 684.500)"><rect x="2.500" y="2.500" width="13" height="13" fill="#e6e8ee" stroke="#6a7080"/><path d="M5.500 9V13H12" fill="none" stroke="#555" stroke-width="1"/><rect x="4" y="11.500" width="2.500" height="2.500" fill="#fff" stroke="#1f6fe0" stroke-width=".9"/><path d="M.8 1.500L3 .3L10.500 8L8.300 10Z" fill="#f5b516" stroke="#8a5a00" stroke-width=".6"/><path d="M8.300 10L10.500 8L11.500 9L9.300 11Z" fill="#b86a2a"/><path d="M.8 1.500L.3 .2L3 .3Z" fill="#fff"/></g><circle cx="1320.400" cy="686.800" r="5.500" fill="#a8a8ab" stroke="#555" stroke-width=".8"/><path d="M1317.400 683.800l6 6m0-6l-6 6" stroke="#e04040" stroke-width="1.500"/><ellipse cx="1858" cy="250" rx="46" ry="22" fill="url(#gsh)"/><path d="M1855.800 187.200L1892 203.700L1888 242L1855.800 264.400L1824.300 241.300L1820.300 204.400Z" fill="#c2c2c3" stroke="#8a8a8c" stroke-width="1"/><path d="M1855.800 187.200L1892 203.700L1855.800 223.700L1820.300 204.400Z" fill="#c8c8c9" stroke="#8a8a8c" stroke-width=".9"/><path d="M1820.300 204.400L1855.800 223.700V264.400L1824.300 241.300Z" fill="#c1c1c2" stroke="#8a8a8c" stroke-width=".9"/><path d="M1892 203.700L1855.800 223.700V264.400L1888 242Z" fill="#bdbdbf" stroke="#8a8a8c" stroke-width=".9"/><path d="M1855.800 216.500l6.500 3.500v7.500l-6.500 4l-6.500-4v-7.500z" fill="#c4c6cc" opacity=".8"/><text font-family="Liberation Sans,sans-serif" font-weight="bold" fill="#8b8d99" stroke="#8b8d99" stroke-width=".35" font-size="8.500" transform="matrix(.9 .42 -.9 .42 1847.500 200.800)">TOP</text><text font-family="Liberation Sans,sans-serif" font-weight="bold" fill="#8b8d99" stroke="#8b8d99" stroke-width=".35" font-size="8.300" transform="matrix(.88 .48 0 1 1826.800 228)">FRONT</text><text font-family="Liberation Sans,sans-serif" font-weight="bold" fill="#8b8d99" stroke="#8b8d99" stroke-width=".35" font-size="8.300" transform="matrix(.88 -.48 0 1 1863 244.500)">RIGHT</text><rect x="1865" y="150.500" width="12" height="3" rx=".8" fill="#fff" stroke="#6a6a70" stroke-width=".7"/><rect x="1889" y="144.800" width="7" height="7.500" rx="1" fill="#fff" stroke="#3c4052" stroke-width="1.100"/><rect x="1885.600" y="147.600" width="7.500" height="7.500" rx="1" fill="#fff" stroke="#3c4052" stroke-width="1.100"/><rect x="1888.300" y="149.800" width="2.200" height="3.400" fill="#fff" stroke="#3c4052" stroke-width=".9"/><path d="M1906 146.300l8.500 7.700m0-7.700l-8.500 7.700" stroke="#3a3036" stroke-width="3.800"/><path d="M1906 146.300l8.500 7.700m0-7.700l-8.500 7.700" stroke="#fff" stroke-width="2.200"/><path d="M408 1100.500V1085" stroke="#12c412" stroke-width="1.200"/><path d="M408 1100.500L394 1108" stroke="#1a1ac8" stroke-width="1.200"/><path d="M408 1100.500L421 1107" stroke="#a01414" stroke-width="1.200"/><path d="M408 1076.500L413.500 1084Q408 1088 402.500 1084Z" fill="#0e8a0e"/><path d="M388 1108.500L392.500 1102L397.500 1105.500V1112.500L390.500 1112Z" fill="#0a0ab4"/><path d="M428.500 1108L423 1102L418.500 1106.500V1112.500L425 1111.500Z" fill="#a00a0a"/><text font-family="Liberation Sans,sans-serif" font-size="11" x="404.200" y="1074" fill="#20e020">Y</text><text font-family="Liberation Sans,sans-serif" font-size="11" x="379.500" y="1118.500" fill="#3c3cf0">Z</text><text font-family="Liberation Sans,sans-serif" font-size="11" x="430" y="1118.500" fill="#f03c3c">X</text></svg>
</div>
<div class="a" style="left:0;top:1153px;width:1919px;height:1px;background:#fff"></div>
<div class="a" style="left:0;top:1154px;width:1919px;height:22px;background:#d4d0c8"></div>
<div class="a" style="left:0;top:1173px;width:1919px;height:1px;background:#fff"></div>
<div class="t" style="left:2px;top:1158px;color:#000">Ready</div>
<div class="a" style="left:1846px;top:1156px;width:35px;height:15px;box-sizing:border-box;border:1px solid;border-color:#868379 #fff #fff #868379"></div>
<div class="a" style="left:1884px;top:1156px;width:36px;height:15px;box-sizing:border-box;border:1px solid;border-color:#868379 #fff #fff #868379"></div>
<div class="t" style="left:1851px;top:1158px;color:#000">1</div>
<div class="t" style="left:1889px;top:1158px;color:#000">1</div>
</body></html>
